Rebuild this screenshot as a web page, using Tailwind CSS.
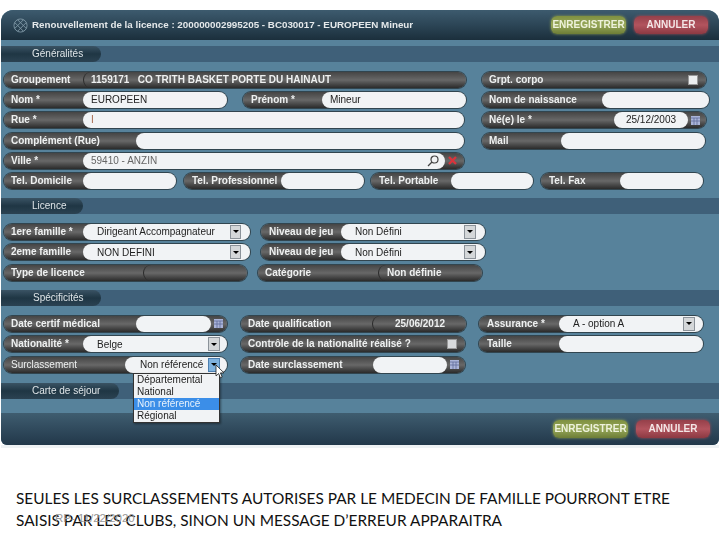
<!DOCTYPE html>
<html lang="fr">
<head>
<meta charset="UTF-8">
<title>Renouvellement de la licence</title>
<script src="https://cdn.jsdelivr.net/npm/@tailwindcss/browser@4"></script>
</head>
<body class="bg-white w-[720px] h-[540px] overflow-hidden relative font-['Liberation_Sans',sans-serif]">

<div class="relative ml-px mt-[10px] w-[718px] h-[435px] rounded-t-xl rounded-b-md overflow-hidden bg-[#57829b] text-[10px] font-bold text-[#eef0f0] whitespace-nowrap flex flex-col blur-[0.3px]">

  <!-- entete -->
  <div class="h-[30px] shrink-0 flex items-center bg-linear-to-b from-[#3d5b6e] via-[#2c4556] to-[#1b2f3c]">
    <svg class="ml-[12px] w-[15px] h-[15px]" viewBox="0 0 16 16" fill="none" stroke="#7f97a5" stroke-width="1"><circle cx="8" cy="8" r="7"/><path d="M2 5l9 9M5 2l9 9M2 11l9-9M5 14l9-9"/></svg>
    <span class="ml-[4px] text-[9.8px] text-[#e4e8ea]">Renouvellement de la licence : 200000002995205 - BC030017 - EUROPEEN Mineur</span>
    <div class="ml-auto flex gap-[8px] mr-[11px]">
      <div class="w-[75px] h-[18px] rounded-md bg-linear-to-b from-[#7f9040] via-[#97a85a] to-[#6d7d36] shadow-[0_0_3px_#8f9f50] text-center leading-[18px] text-[#eef2dc]">ENREGISTRER</div>
      <div class="w-[74px] h-[18px] rounded-md bg-linear-to-b from-[#95404a] via-[#b2545e] to-[#8c3942] shadow-[0_0_3px_#a84c56] text-center leading-[18px] text-[#f3e6e6]">ANNULER</div>
    </div>
  </div>
  <div class="h-[6px] shrink-0"></div>

  <!-- Generalites -->
  <div class="h-4 shrink-0 bg-[#3f6079]">
    <div class="w-[100px] h-4 rounded-r-full bg-linear-to-b from-[#3a5364] via-[#1f3644] to-[#2b4252] pl-[31px] leading-4 font-normal text-[#dfe5e8]">Généralités</div>
  </div>
  <div class="flex flex-col gap-[4.2px] pl-[3px] pt-[10px] pb-[9px] shrink-0">
    <div class="flex h-4">
      <div class="flex w-[462px] h-4 rounded-full bg-linear-to-b from-[#454545] via-[#686868] to-[#2b2b2b] ring-1 ring-[#31454f]">
        <span class="w-[79px] pl-[7px] leading-4">Groupement</span>
        <div class="flex-1 rounded-l-full border-l border-[#2a2a2a] pl-[7px] leading-4">1159171 &nbsp; CO TRITH BASKET PORTE DU HAINAUT</div>
      </div>
      <div class="flex items-center w-[224px] ml-[16px] h-4 rounded-full bg-linear-to-b from-[#454545] via-[#686868] to-[#2b2b2b] ring-1 ring-[#31454f]">
        <span class="pl-[7px] leading-4">Grpt. corpo</span>
        <div class="ml-auto mr-[8px] w-[10px] h-[10px] bg-[#eceeef] border border-[#999]"></div>
      </div>
    </div>
    <div class="flex h-4">
      <div class="flex w-[223px] h-4 rounded-full bg-linear-to-b from-[#454545] via-[#686868] to-[#2b2b2b] ring-1 ring-[#31454f]">
        <span class="w-[79px] pl-[7px] leading-4">Nom *</span>
        <div class="flex-1 rounded-full bg-[#f1f3f5] pl-[8px] leading-4 font-normal text-[#222]">EUROPEEN</div>
      </div>
      <div class="flex w-[223px] ml-[16px] h-4 rounded-full bg-linear-to-b from-[#454545] via-[#686868] to-[#2b2b2b] ring-1 ring-[#31454f]">
        <span class="w-[79px] pl-[8px] leading-4">Prénom *</span>
        <div class="flex-1 rounded-full bg-[#f1f3f5] pl-[8px] leading-4 font-normal text-[#222]">Mineur</div>
      </div>
      <div class="flex w-[227px] ml-[16px] h-4 rounded-full bg-linear-to-b from-[#454545] via-[#686868] to-[#2b2b2b] ring-1 ring-[#31454f]">
        <span class="w-[120px] pl-[7px] leading-4">Nom de naissance</span>
        <div class="flex-1 rounded-full bg-[#f1f3f5]"></div>
      </div>
    </div>
    <div class="flex h-4">
      <div class="flex w-[460px] h-4 rounded-full bg-linear-to-b from-[#454545] via-[#686868] to-[#2b2b2b] ring-1 ring-[#31454f]">
        <span class="w-[79px] pl-[7px] leading-4">Rue *</span>
        <div class="flex-1 rounded-full bg-[#f1f3f5] pl-[8px] leading-4 font-normal text-[#a5664a]">I</div>
      </div>
      <div class="flex items-center w-[224px] ml-[18px] h-4 rounded-full bg-linear-to-b from-[#454545] via-[#686868] to-[#2b2b2b] ring-1 ring-[#31454f]">
        <span class="w-[132px] pl-[7px] leading-4">Né(e) le *</span>
        <div class="w-[74px] h-4 rounded-full bg-[#f1f3f5] text-center leading-4 font-normal text-[#222]">25/12/2003</div>
        <svg class="ml-[3px] w-[9px] h-[9px]" viewBox="0 0 9 9"><rect width="9" height="9" fill="#aab4d8"/><path d="M3 2v7M6 2v7M0 2h9M0 5h9" stroke="#5f6d9c" stroke-width=".8"/></svg>
      </div>
    </div>
    <div class="flex h-4">
      <div class="flex w-[460px] h-4 rounded-full bg-linear-to-b from-[#454545] via-[#686868] to-[#2b2b2b] ring-1 ring-[#31454f]">
        <span class="w-[132px] pl-[7px] leading-4">Complément (Rue)</span>
        <div class="flex-1 rounded-full bg-[#f1f3f5]"></div>
      </div>
      <div class="flex w-[223px] ml-[18px] h-4 rounded-full bg-linear-to-b from-[#454545] via-[#686868] to-[#2b2b2b] ring-1 ring-[#31454f]">
        <span class="w-[79px] pl-[7px] leading-4">Mail</span>
        <div class="flex-1 rounded-full bg-[#f1f3f5]"></div>
      </div>
    </div>
    <div class="flex h-4">
      <div class="flex items-center w-[460px] h-4 rounded-full bg-linear-to-b from-[#454545] via-[#686868] to-[#2b2b2b] ring-1 ring-[#31454f]">
        <span class="w-[79px] pl-[7px] leading-4">Ville *</span>
        <div class="flex w-[362px] h-4 items-center rounded-full bg-[#f1f3f5] pl-[8px] leading-4 font-normal text-[#666]">59410 - ANZIN
          <svg class="ml-auto mr-[6px] w-[12px] h-[12px]" viewBox="0 0 12 12" fill="none" stroke="#444" stroke-width="1.2"><circle cx="7.5" cy="4.5" r="3.5"/><path d="M5 7l-4 4"/></svg>
        </div>
        <svg class="ml-[2px] w-[11px] h-[11px]" viewBox="0 0 11 11" fill="none" stroke="#d8343c" stroke-width="2.4"><path d="M2 2l7 7M9 2l-7 7"/></svg>
      </div>
    </div>
    <div class="flex h-4">
      <div class="flex w-[172px] h-4 rounded-full bg-linear-to-b from-[#454545] via-[#686868] to-[#2b2b2b] ring-1 ring-[#31454f]">
        <span class="w-[79px] pl-[7px] leading-4">Tel. Domicile</span>
        <div class="flex-1 rounded-full bg-[#f1f3f5]"></div>
      </div>
      <div class="flex w-[180px] ml-[8px] h-4 rounded-full bg-linear-to-b from-[#454545] via-[#686868] to-[#2b2b2b] ring-1 ring-[#31454f]">
        <span class="w-[97px] pl-[8px] leading-4">Tel. Professionnel</span>
        <div class="flex-1 rounded-full bg-[#f1f3f5]"></div>
      </div>
      <div class="flex w-[162px] ml-[7px] h-4 rounded-full bg-linear-to-b from-[#454545] via-[#686868] to-[#2b2b2b] ring-1 ring-[#31454f]">
        <span class="w-[80px] pl-[8px] leading-4">Tel. Portable</span>
        <div class="flex-1 rounded-full bg-[#f1f3f5]"></div>
      </div>
      <div class="flex w-[162px] ml-[8px] h-4 rounded-full bg-linear-to-b from-[#454545] via-[#686868] to-[#2b2b2b] ring-1 ring-[#31454f]">
        <span class="w-[79px] pl-[8px] leading-4">Tel. Fax</span>
        <div class="flex-1 rounded-full bg-[#f1f3f5]"></div>
      </div>
    </div>
  </div>

  <!-- Licence -->
  <div class="h-4 shrink-0 bg-[#3f6079]">
    <div class="w-[82px] h-4 rounded-r-full bg-linear-to-b from-[#3a5364] via-[#1f3644] to-[#2b4252] pl-[31px] leading-4 font-normal text-[#dfe5e8]">Licence</div>
  </div>
  <div class="flex flex-col gap-[4.4px] pl-[3px] pt-[10px] pb-[9px] shrink-0">
    <div class="flex h-4">
      <div class="flex w-[246px] h-4 rounded-full bg-linear-to-b from-[#454545] via-[#686868] to-[#2b2b2b] ring-1 ring-[#31454f]">
        <span class="w-[79px] pl-[7px] leading-4">1ere famille *</span>
        <div class="flex flex-1 items-center rounded-full bg-[#f1f3f5] pl-[14px] font-normal text-[#222]">Dirigeant Accompagnateur
          <div class="ml-auto mr-[9px] w-[11px] h-[14px] bg-[#d4d7d9] border border-[#8b9299] flex items-center justify-center"><div class="w-0 h-0 border-x-[3px] border-x-transparent border-t-[3px] border-t-black"></div></div>
        </div>
      </div>
      <div class="flex w-[224px] ml-[11px] h-4 rounded-full bg-linear-to-b from-[#454545] via-[#686868] to-[#2b2b2b] ring-1 ring-[#31454f]">
        <span class="w-[80px] pl-[8px] leading-4">Niveau de jeu</span>
        <div class="flex flex-1 items-center rounded-full bg-[#f1f3f5] pl-[14px] font-normal text-[#222]">Non Défini
          <div class="ml-auto mr-[9px] w-[12px] h-[14px] bg-[#d4d7d9] border border-[#8b9299] flex items-center justify-center"><div class="w-0 h-0 border-x-[3px] border-x-transparent border-t-[3px] border-t-black"></div></div>
        </div>
      </div>
    </div>
    <div class="flex h-4">
      <div class="flex w-[246px] h-4 rounded-full bg-linear-to-b from-[#454545] via-[#686868] to-[#2b2b2b] ring-1 ring-[#31454f]">
        <span class="w-[79px] pl-[7px] leading-4">2eme famille</span>
        <div class="flex flex-1 items-center rounded-full bg-[#f1f3f5] pl-[14px] font-normal text-[#222]">NON DEFINI
          <div class="ml-auto mr-[9px] w-[11px] h-[14px] bg-[#d4d7d9] border border-[#8b9299] flex items-center justify-center"><div class="w-0 h-0 border-x-[3px] border-x-transparent border-t-[3px] border-t-black"></div></div>
        </div>
      </div>
      <div class="flex w-[224px] ml-[11px] h-4 rounded-full bg-linear-to-b from-[#454545] via-[#686868] to-[#2b2b2b] ring-1 ring-[#31454f]">
        <span class="w-[80px] pl-[8px] leading-4">Niveau de jeu</span>
        <div class="flex flex-1 items-center rounded-full bg-[#f1f3f5] pl-[14px] font-normal text-[#222]">Non Défini
          <div class="ml-auto mr-[9px] w-[12px] h-[14px] bg-[#d4d7d9] border border-[#8b9299] flex items-center justify-center"><div class="w-0 h-0 border-x-[3px] border-x-transparent border-t-[3px] border-t-black"></div></div>
        </div>
      </div>
    </div>
    <div class="flex h-4">
      <div class="flex w-[243px] h-4 rounded-full bg-linear-to-b from-[#454545] via-[#686868] to-[#2b2b2b] ring-1 ring-[#31454f]">
        <span class="w-[139px] pl-[7px] leading-4">Type de licence</span>
        <div class="flex-1 rounded-l-full border-l border-[#2a2a2a]"></div>
      </div>
      <div class="flex w-[224px] ml-[11px] h-4 rounded-full bg-linear-to-b from-[#454545] via-[#686868] to-[#2b2b2b] ring-1 ring-[#31454f]">
        <span class="w-[120px] pl-[7px] leading-4">Catégorie</span>
        <div class="flex-1 rounded-l-full border-l border-[#2a2a2a] pl-[8px] leading-4">Non définie</div>
      </div>
    </div>
  </div>

  <!-- Specificites -->
  <div class="h-4 shrink-0 bg-[#3f6079]">
    <div class="w-[100px] h-4 rounded-r-full bg-linear-to-b from-[#3a5364] via-[#1f3644] to-[#2b4252] pl-[32px] leading-4 font-normal text-[#dfe5e8]">Spécificités</div>
  </div>
  <div class="flex flex-col gap-[4.4px] pl-[3px] pt-[10px] pb-[10px] shrink-0">
    <div class="flex h-4">
      <div class="flex items-center w-[223px] h-4 rounded-full bg-linear-to-b from-[#454545] via-[#686868] to-[#2b2b2b] ring-1 ring-[#31454f]">
        <span class="w-[132px] pl-[7px] leading-4">Date certif médical</span>
        <div class="w-[75px] h-4 rounded-full bg-[#f1f3f5]"></div>
        <svg class="ml-[3px] w-[9px] h-[9px]" viewBox="0 0 9 9"><rect width="9" height="9" fill="#aab4d8"/><path d="M3 2v7M6 2v7M0 2h9M0 5h9" stroke="#5f6d9c" stroke-width=".8"/></svg>
      </div>
      <div class="flex w-[225px] ml-[14px] h-4 rounded-full bg-linear-to-b from-[#454545] via-[#686868] to-[#2b2b2b] ring-1 ring-[#31454f]">
        <span class="w-[131px] pl-[7px] leading-4">Date qualification</span>
        <div class="flex-1 rounded-l-full border-l border-[#2a2a2a] pl-[22px] leading-4">25/06/2012</div>
      </div>
      <div class="flex w-[224px] ml-[13px] h-4 rounded-full bg-linear-to-b from-[#454545] via-[#686868] to-[#2b2b2b] ring-1 ring-[#31454f]">
        <span class="w-[80px] pl-[8px] leading-4">Assurance *</span>
        <div class="flex flex-1 items-center rounded-full bg-[#f1f3f5] pl-[14px] font-normal text-[#222]">A - option A
          <div class="ml-auto mr-[8px] w-[12px] h-[14px] bg-[#d4d7d9] border border-[#8b9299] flex items-center justify-center"><div class="w-0 h-0 border-x-[3px] border-x-transparent border-t-[3px] border-t-black"></div></div>
        </div>
      </div>
    </div>
    <div class="flex h-4">
      <div class="flex w-[223px] h-4 rounded-full bg-linear-to-b from-[#454545] via-[#686868] to-[#2b2b2b] ring-1 ring-[#31454f]">
        <span class="w-[79px] pl-[7px] leading-4">Nationalité *</span>
        <div class="flex flex-1 items-center rounded-full bg-[#f1f3f5] pl-[14px] font-normal text-[#222]">Belge
          <div class="ml-auto mr-[7px] w-[12px] h-[14px] bg-[#d4d7d9] border border-[#8b9299] flex items-center justify-center"><div class="w-0 h-0 border-x-[3px] border-x-transparent border-t-[3px] border-t-black"></div></div>
        </div>
      </div>
      <div class="flex items-center w-[224px] ml-[14px] h-4 rounded-full bg-linear-to-b from-[#454545] via-[#686868] to-[#2b2b2b] ring-1 ring-[#31454f]">
        <span class="pl-[7px] leading-4">Contrôle de la nationalité réalisé ?</span>
        <div class="ml-auto mr-[8px] w-[10px] h-[10px] bg-[#d8dadc] border border-[#999]"></div>
      </div>
      <div class="flex w-[224px] ml-[14px] h-4 rounded-full bg-linear-to-b from-[#454545] via-[#686868] to-[#2b2b2b] ring-1 ring-[#31454f]">
        <span class="w-[80px] pl-[8px] leading-4">Taille</span>
        <div class="flex-1 rounded-full bg-[#f1f3f5]"></div>
      </div>
    </div>
    <div class="flex h-4">
      <div class="flex w-[223px] h-4 rounded-full bg-linear-to-b from-[#454545] via-[#686868] to-[#2b2b2b] ring-1 ring-[#31454f]">
        <span class="w-[121px] pl-[7px] leading-4 font-normal">Surclassement</span>
        <div class="flex flex-1 items-center rounded-full bg-[#f1f3f5] pl-[15px] font-normal text-[#222]">Non référencé
          <div class="ml-auto mr-[7px] w-[12px] h-[14px] bg-[#7fb2de] border border-[#4d7fb0] flex items-center justify-center"><div class="w-0 h-0 border-x-[3px] border-x-transparent border-t-[3px] border-t-black"></div></div>
        </div>
      </div>
      <div class="flex items-center w-[224px] ml-[14px] h-4 rounded-full bg-linear-to-b from-[#454545] via-[#686868] to-[#2b2b2b] ring-1 ring-[#31454f]">
        <span class="w-[132px] pl-[7px] leading-4">Date surclassement</span>
        <div class="w-[74px] h-4 rounded-full bg-[#f1f3f5]"></div>
        <svg class="ml-[3px] w-[9px] h-[9px]" viewBox="0 0 9 9"><rect width="9" height="9" fill="#aab4d8"/><path d="M3 2v7M6 2v7M0 2h9M0 5h9" stroke="#5f6d9c" stroke-width=".8"/></svg>
      </div>
    </div>
  </div>

  <!-- Carte de sejour -->
  <div class="h-4 shrink-0 bg-[#3f6079]">
    <div class="w-[118px] h-4 rounded-r-full bg-linear-to-b from-[#3a5364] via-[#1f3644] to-[#2b4252] pl-[31px] leading-4 font-normal text-[#dfe5e8]">Carte de séjour</div>
  </div>
  <div class="h-[14px] shrink-0"></div>

  <!-- pied -->
  <div class="flex-1 flex items-start justify-end pt-[7px] pr-[9px] gap-[8px] bg-linear-to-b from-[#3f5d70] to-[#22384a]">
    <div class="w-[75px] h-[18px] rounded-md bg-linear-to-b from-[#7f9040] via-[#97a85a] to-[#6d7d36] shadow-[0_0_3px_#8f9f50] text-center leading-[18px] text-[#eef2dc]">ENREGISTRER</div>
    <div class="w-[74px] h-[18px] rounded-md bg-linear-to-b from-[#95404a] via-[#b2545e] to-[#8c3942] shadow-[0_0_3px_#a84c56] text-center leading-[18px] text-[#f3e6e6]">ANNULER</div>
  </div>

  <!-- liste ouverte -->
  <div class="absolute left-[132px] top-[363px] w-[87px] bg-[#f1f3f5] border border-[#333] shadow-[1px_1px_2px_#0006] font-normal text-[#222] leading-[12px]">
    <div class="pl-[3px]">Départemental</div>
    <div class="pl-[3px]">National</div>
    <div class="pl-[3px] bg-[#3b8ee8] text-[#e8f2fc]">Non référencé</div>
    <div class="pl-[3px]">Régional</div>
  </div>
  <svg class="absolute left-[214px] top-[354px] w-[10px] h-[15px]" viewBox="0 0 10 15"><path d="M1 1v11l2.6-2.4 1.8 4.2 1.8-.8-1.8-4.1H9z" fill="#fff" stroke="#222" stroke-width=".8"/></svg>
</div>
<div class="ml-px w-[718px] h-[3px] bg-[#eef2f4]"></div>

<div class="pl-4 pt-[39px] font-['Lato',sans-serif] text-[15.4px] leading-[22px] text-[#111]">
  <p>SEULES LES SURCLASSEMENTS AUTORISES PAR LE MEDECIN DE FAMILLE POURRONT ETRE</p>
  <p>SAISIS PAR LES CLUBS, SINON UN MESSAGE D’ERREUR APPARAITRA</p>
</div>
<span class="absolute left-[55px] top-[510px] text-[11.5px] text-[#999]">RP- 11/22/2020</span>
</body>
</html>
